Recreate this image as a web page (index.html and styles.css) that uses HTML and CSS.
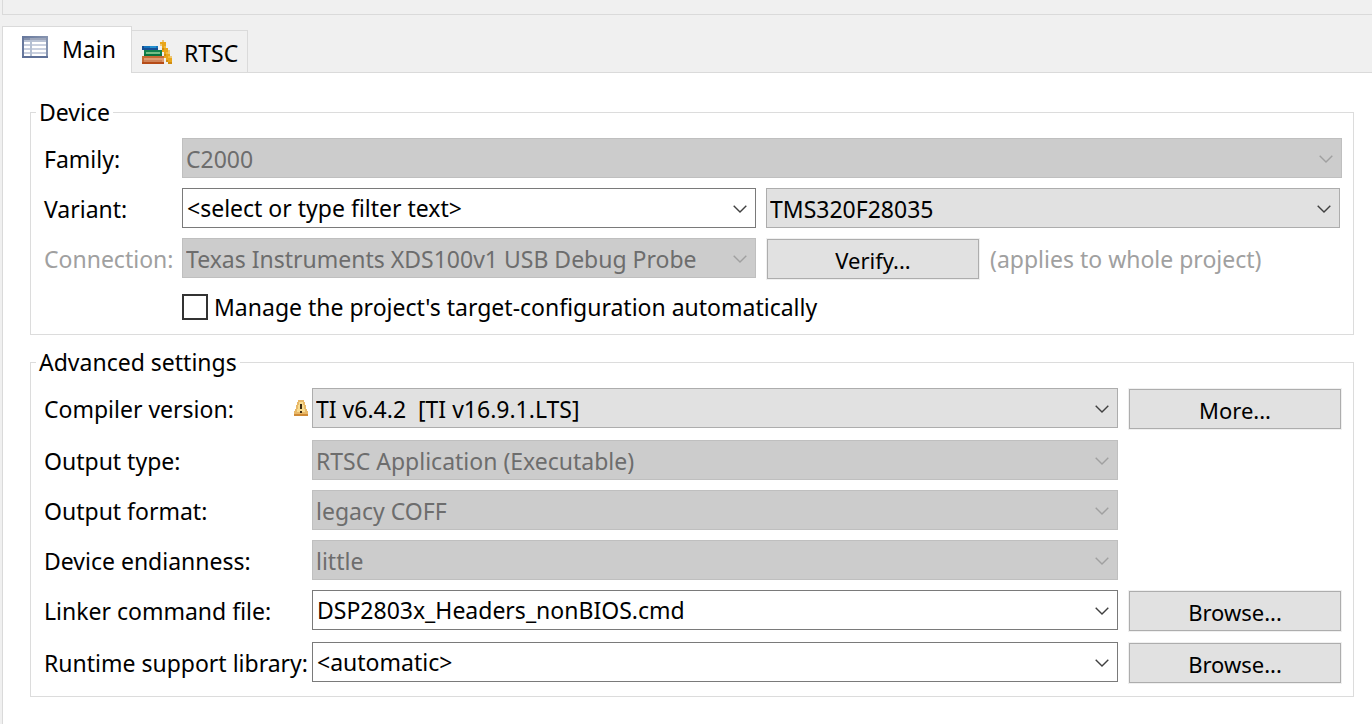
FILE: index.html
```
<!DOCTYPE html>
<html lang="en">
<head>
<meta charset="utf-8">
<title>Project settings</title>
<link rel="stylesheet" href="styles.css">
</head>
<body>
<svg class="defs" aria-hidden="true"><symbol id="chevron" viewBox="0 0 14 8"><path d="M.7.7 7 7 13.3.7" fill="none" stroke="currentColor" stroke-width="1.4"/></symbol></svg>
<div class="top-panel"></div>
<main class="folder">
  <div class="tabs" role="tablist">
    <button class="tab tab-active" role="tab" aria-selected="true" type="button">
      <svg class="icon-table" viewBox="0 0 13 11" shape-rendering="crispEdges" aria-hidden="true">
        <defs><linearGradient id="frame" x1="0" y1="0" x2="1" y2="0"><stop offset="0" stop-color="#66779c"/><stop offset="1" stop-color="#8795b0"/></linearGradient></defs>
        <rect width="13" height="11" fill="url(#frame)"/>
        <rect x="1" y="1" width="11" height="1" fill="#9da6bb"/>
        <rect x="1" y="1" width="3" height="1" fill="#8490ab"/>
        <rect x="1" y="2" width="11" height="8" fill="#fff"/>
        <path d="M1 2h11v1H1z" fill="#b9c2d4"/>
        <path d="M1 4h11v1H1zM1 6h11v1H1zM1 8h11v1H1z" fill="#c9d0df"/>
        <path d="M4 2h1v8H4z" fill="#b4bfd2"/>
        <path d="M0 10h13v1H0z" fill="#5f7198"/>
      </svg>
      <span>Main</span>
    </button>
    <button class="tab" role="tab" aria-selected="false" type="button">
      <svg class="icon-books" viewBox="0 0 15 12" shape-rendering="crispEdges" aria-hidden="true">
        <path d="M0 3h8v2H0z" fill="#164f94"/><path d="M1 3h7v1H1z" fill="#1475bd"/><path d="M4 3h3v1H4z" fill="#2490d0"/>
        <path d="M1 5h9v3H1z" fill="#12814f"/><path d="M2 6h7v1H2z" fill="#75bd86"/><path d="M1 7h9v1H1z" fill="#08733f"/>
        <path d="M0 8h11v4H0z" fill="#c56a35"/><path d="M1 9h10v2H1z" fill="#dc9b72"/><path d="M1 10h9v1H1z" fill="#cf8257"/><path d="M0 11h11v1H0z" fill="#b64b17"/>
        <path d="M9 1h3v3h1v3h1v2h1v3h-2v-1h-1V9h-1V6h-1V3H9z" fill="#e9a61a"/>
        <path d="M10 0h1v1h-1zM9 2h1v1H9zM13 5h1v2h-1zM14 8h1v1h-1z" fill="#ecc777"/>
        <path d="M11 3h1v1h-1zM12 6h1v1h-1zM13 8h1v1h-1z" fill="#f2bd3c"/>
        <path d="M10 4h1v1h-1zM11 7h1v1h-1zM12 10h1v1h-1zM13 11h2v1h-2z" fill="#d08c10"/>
      </svg>
      <span>RTSC</span>
    </button>
    <div class="tabs-rest"></div>
  </div>
  <div class="page">
    <fieldset class="group">
      <legend>Device</legend>
      <div class="device-grid">
        <label for="family">Family:</label>
        <span class="combo disabled"><select id="family" disabled><option>C2000</option></select><svg class="chevron"><use href="#chevron"/></svg></span>

        <label for="variant">Variant:</label>
        <div class="halves">
          <span class="combo editable"><input id="variant" type="text" value="&lt;select or type filter text&gt;"><svg class="chevron"><use href="#chevron"/></svg></span>
          <span class="combo"><select aria-label="Device variant"><option>TMS320F28035</option></select><svg class="chevron"><use href="#chevron"/></svg></span>
        </div>

        <label class="muted" for="connection">Connection:</label>
        <div class="halves">
          <span class="combo disabled"><select id="connection" disabled><option>Texas Instruments XDS100v1 USB Debug Probe</option></select><svg class="chevron"><use href="#chevron"/></svg></span>
          <div class="verify"><button class="push" type="button">Verify...</button><span class="muted">(applies to whole project)</span></div>
        </div>

        <label class="check"><input type="checkbox"><span>Manage the project's target-configuration automatically</span></label>
      </div>
    </fieldset>

    <fieldset class="group">
      <legend>Advanced settings</legend>
      <div class="advanced-grid">
        <label class="warned" for="compiler"><span>Compiler version:</span>
          <svg class="icon-warning" viewBox="0 0 14 16" aria-hidden="true">
            <path d="M4 0h6v2h1v3h1v4h1v2h1v5H0v-5h1V9h1V5h1V2h1z" fill="#e8b868"/>
            <path d="M5 2h4v3h1v4h1v3H3V9h1V5h1z" fill="#f8dc92"/>
            <path d="M0 14h14v2H0z" fill="#cf8a35"/>
            <path d="M6 4h2v5H6zM6 11h2v2H6z" fill="#3c2a12"/>
          </svg>
        </label>
        <span class="combo"><select id="compiler"><option>TI v6.4.2&nbsp; [TI v16.9.1.LTS]</option></select><svg class="chevron"><use href="#chevron"/></svg></span>
        <button class="push" type="button">More...</button>

        <label for="otype">Output type:</label>
        <span class="combo disabled"><select id="otype" disabled><option>RTSC Application (Executable)</option></select><svg class="chevron"><use href="#chevron"/></svg></span>

        <label for="oformat">Output format:</label>
        <span class="combo disabled"><select id="oformat" disabled><option>legacy COFF</option></select><svg class="chevron"><use href="#chevron"/></svg></span>

        <label for="endian">Device endianness:</label>
        <span class="combo disabled"><select id="endian" disabled><option>little</option></select><svg class="chevron"><use href="#chevron"/></svg></span>

        <label for="linker">Linker command file:</label>
        <span class="combo editable"><input id="linker" type="text" value="DSP2803x_Headers_nonBIOS.cmd"><svg class="chevron"><use href="#chevron"/></svg></span>
        <button class="push" type="button">Browse...</button>

        <label for="runtime">Runtime support library:</label>
        <span class="combo editable"><input id="runtime" type="text" value="&lt;automatic&gt;"><svg class="chevron"><use href="#chevron"/></svg></span>
        <button class="push" type="button">Browse...</button>
      </div>
    </fieldset>
  </div>
</main>
</body>
</html>
```
FILE: styles.css
```
* { box-sizing: border-box; }

body {
  margin: 0;
  min-height: 100vh;
  display: flex;
  flex-direction: column;
  background: #f0f0f0;
  color: #000;
  font: 23px/30px "Noto Sans", sans-serif;
}

button, input, select { font: inherit; color: inherit; }

.defs { display: none; }

.top-panel {
  height: 15px;
  margin-left: 2px;
  border: solid #dadada;
  border-width: 0 0 1px 1px;
}

.folder {
  flex: 1;
  display: flex;
  flex-direction: column;
  margin: 11px 0 0 2px;
}

.tabs { display: flex; align-items: flex-end; }

.tab {
  display: flex;
  align-items: center;
  gap: 12px;
  height: 43px;
  padding: 2px 9px 0 10px;
  border: 1px solid #dadada;
  border-left: 0;
  background: #f0f0f0;
  white-space: nowrap;
}

.tab-active {
  gap: 14px;
  height: 47px;
  padding: 0 15px 2px 19px;
  border-left: 1px solid #dadada;
  border-bottom: 0;
  background: #fff;
}

.tabs-rest { flex: 1; border-bottom: 1px solid #dadada; }

.icon-table { width: 26px; height: 22px; margin-bottom: 4px; }
.icon-books { width: 30px; height: 24px; margin-bottom: 2px; }

.page {
  flex: 1;
  display: flex;
  flex-direction: column;
  gap: 12px;
  padding: 24px 18px 27px 27px;
  border-left: 1px solid #dadada;
  background: #fff;
}

.group {
  min-width: 0;
  margin: 0;
  padding: 11px 11px 12px 13px;
  border: 1px solid #dcdcdc;
}

.group legend { margin-left: -8px; padding: 0 3px; }

.device-grid, .advanced-grid {
  display: grid;
  row-gap: 10px;
  align-items: start;
}

.device-grid { grid-template-columns: 138px minmax(0, 1fr); }

.advanced-grid {
  grid-template-columns: 268px minmax(0, 1fr) 214px;
}

.device-grid > label, .advanced-grid > label {
  padding: 6px 0 4px;
  white-space: nowrap;
}

.advanced-grid > label { grid-column: 1; }
.advanced-grid > .combo { margin-right: 10px; }

.halves {
  display: grid;
  grid-template-columns: repeat(2, minmax(0, 1fr));
  gap: 10px;
  padding-right: 2px;
}

.combo {
  position: relative;
  display: block;
  height: 40px;
}

.combo select, .combo input {
  display: block;
  width: 100%;
  height: 100%;
  margin: 0;
  padding: 2px 32px 0 3px;
  border: 1px solid #adadad;
  border-radius: 0;
  background: #e1e1e1;
  appearance: none;
}

.combo.editable input {
  padding-top: 0;
  padding-left: 4px;
  border-color: #7a7a7a;
  background: #fff;
}

.combo.disabled select {
  border-color: #bfbfbf;
  background: #ccc;
  color: #6d6d6d;
  opacity: 1;
}

.chevron {
  position: absolute;
  top: 17px;
  right: 9px;
  width: 14px;
  height: 8px;
  color: #404040;
  pointer-events: none;
}

.disabled .chevron { color: #a0a0a0; }

.push {
  height: 40px;
  margin: 1px;
  padding: 2px 8px 0;
  border: 1px solid #adadad;
  background: #e1e1e1;
  box-shadow: 0 0 0 1px #f0f0f0;
  font-size: 22px;
}

.verify { display: flex; align-items: center; gap: 10px; }
.verify .push { width: 212px; }
.verify span { white-space: nowrap; }
.muted { color: #a0a0a0; }

.device-grid > .check {
  grid-column: 2;
  display: flex;
  align-items: center;
  gap: 6px;
  padding: 2px 0 0;
}

.check input {
  width: 26px;
  height: 26px;
  margin: 0;
  border: 2px solid #333;
  background: #fff;
  appearance: none;
}

.warned { display: flex; justify-content: space-between; }
.icon-warning { width: 14px; height: 16px; margin: 6px 4px 0 0; }
```
